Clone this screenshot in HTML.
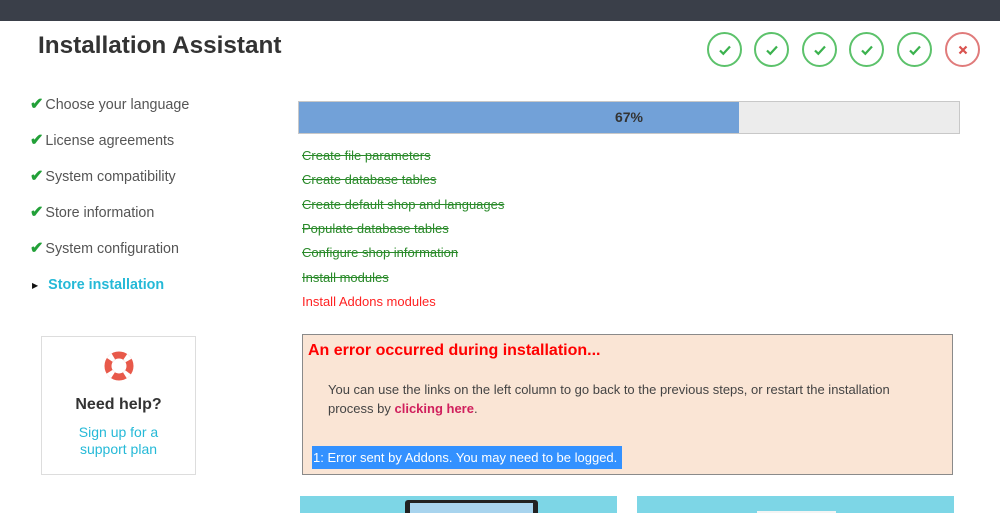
<!DOCTYPE html>
<html><head><meta charset="utf-8"><style>
*{margin:0;padding:0;box-sizing:border-box}
body{width:1000px;height:513px;overflow:hidden;background:#fff;font-family:"Liberation Sans",Arial,sans-serif;position:relative}
.a{position:absolute}
.top{left:0;top:0;width:1000px;height:21px;background:#3a3f49}
h1{position:absolute;left:38px;top:32px;font-size:24.3px;font-weight:bold;color:#333}
.c{position:absolute;top:32px;width:35px;height:35px;border-radius:50%;border:2px solid #5cc26b}
.c svg{position:absolute;left:9px;top:9px}
.c.x{border-color:#e07b7b}
.side{left:30px;font-size:14.3px;color:#555;line-height:18px}
.side b{color:#22a038;font-size:16px;margin-right:2px}
.st{left:302px;font-size:13px;color:#2a8a2a;text-decoration:line-through}
</style></head><body>
<div class="a top"></div>
<h1>Installation Assistant</h1>
<div class="c" style="left:707px"><svg width="14" height="14" viewBox="0 0 14 14"><path d="M2 7.5l3.3 3.3L12 3.5" fill="none" stroke="#3bb24e" stroke-width="2.2"/></svg></div>
<div class="c" style="left:754px"><svg width="14" height="14" viewBox="0 0 14 14"><path d="M2 7.5l3.3 3.3L12 3.5" fill="none" stroke="#3bb24e" stroke-width="2.2"/></svg></div>
<div class="c" style="left:802px"><svg width="14" height="14" viewBox="0 0 14 14"><path d="M2 7.5l3.3 3.3L12 3.5" fill="none" stroke="#3bb24e" stroke-width="2.2"/></svg></div>
<div class="c" style="left:849px"><svg width="14" height="14" viewBox="0 0 14 14"><path d="M2 7.5l3.3 3.3L12 3.5" fill="none" stroke="#3bb24e" stroke-width="2.2"/></svg></div>
<div class="c" style="left:897px"><svg width="14" height="14" viewBox="0 0 14 14"><path d="M2 7.5l3.3 3.3L12 3.5" fill="none" stroke="#3bb24e" stroke-width="2.2"/></svg></div>
<div class="c x" style="left:945px"><svg width="14" height="14" viewBox="0 0 14 14"><path d="M3.5 3.5l7 7M10.5 3.5l-7 7" fill="none" stroke="#d9534f" stroke-width="2.2"/></svg></div>

<div class="a side" style="top:96px"><b>&#10004;</b>Choose your language</div>
<div class="a side" style="top:132px"><b>&#10004;</b>License agreements</div>
<div class="a side" style="top:168px"><b>&#10004;</b>System compatibility</div>
<div class="a side" style="top:204px"><b>&#10004;</b>Store information</div>
<div class="a side" style="top:240px"><b>&#10004;</b>System configuration</div>
<div class="a side" style="top:276px"><span style="font-size:8px;color:#111;margin-left:2px;margin-right:10px;vertical-align:1px">&#9654;</span><span style="color:#25b9d7;font-weight:bold">Store installation</span></div>

<div class="a" style="left:41px;top:336px;width:155px;height:139px;border:1px solid #ddd;text-align:center">
<svg width="30" height="30" viewBox="0 0 30 30" style="margin-top:14px"><circle cx="15" cy="15" r="11" fill="none" stroke="#e8594a" stroke-width="7"/><circle cx="15" cy="15" r="11" fill="none" stroke="#fff" stroke-width="7" stroke-dasharray="5 12.3" stroke-dashoffset="2.5" transform="rotate(45 15 15)"/></svg>
<div style="font-size:16px;font-weight:bold;color:#333;margin-top:10px">Need help?</div>
<div style="font-size:14px;color:#25b9d7;line-height:17px;margin-top:10px">Sign up for a<br>support plan</div>
</div>

<div class="a" style="left:298px;top:101px;width:662px;height:33px;background:#ececec;border:1px solid #c8c8c8"></div>
<div class="a" style="left:299px;top:102px;width:440px;height:31px;background:#72a1d8"></div>
<div class="a" style="left:299px;top:109px;width:660px;text-align:center;font-size:14px;font-weight:bold;color:#333">67%</div>

<div class="a st" style="top:148px">Create file parameters</div>
<div class="a st" style="top:172px">Create database tables</div>
<div class="a st" style="top:197px">Create default shop and languages</div>
<div class="a st" style="top:221px">Populate database tables</div>
<div class="a st" style="top:245px">Configure shop information</div>
<div class="a st" style="top:270px">Install modules</div>
<div class="a" style="left:302px;top:294px;font-size:13px;color:#f22">Install Addons modules</div>

<div class="a" style="left:302px;top:334px;width:651px;height:141px;background:#fae5d5;border:1px solid #8a8a8a">
<div style="position:absolute;left:5px;top:7px;font-size:16px;font-weight:bold;color:#f00">An error occurred during installation...</div>
<div style="position:absolute;left:25px;top:45px;font-size:13px;color:#444;line-height:19px">You can use the links on the left column to go back to the previous steps, or restart the installation<br>process by <b style="color:#d0205d">clicking here</b>.</div>
<div style="position:absolute;left:9px;top:111px;width:310px;height:23px;background:#3391ff;color:#fff;font-size:13px;line-height:23px;padding-left:1px;white-space:nowrap">1: Error sent by Addons. You may need to be logged.</div>
</div>

<div class="a" style="left:300px;top:496px;width:317px;height:17px;background:#7dd6e6"></div>
<div class="a" style="left:405px;top:500px;width:133px;height:13px;background:#222;border-radius:3px 3px 0 0"></div>
<div class="a" style="left:410px;top:503px;width:123px;height:10px;background:#a8d4ee"></div>
<div class="a" style="left:637px;top:496px;width:317px;height:17px;background:#7dd6e6"></div>
<div class="a" style="left:757px;top:511px;width:79px;height:2px;background:#f4f4f4"></div>
</body></html>
